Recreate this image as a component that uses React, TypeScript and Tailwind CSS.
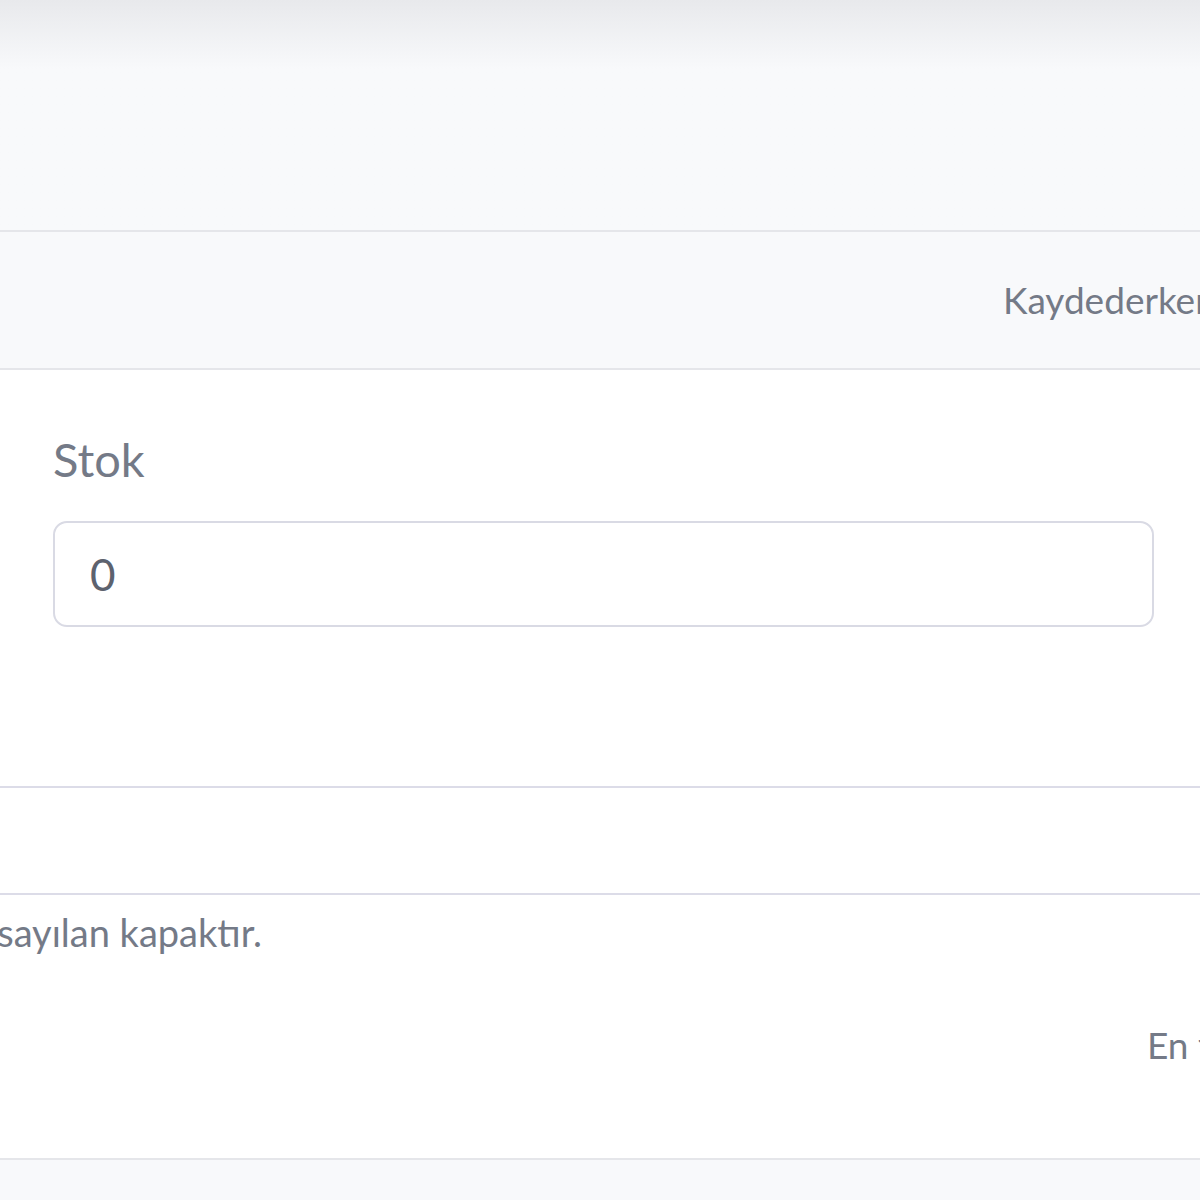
import React from 'react';

const font = { fontFamily: 'Lato, "Noto Sans", sans-serif' };

const App: React.FC = () => {
  return (
    <div className="w-[1200px] h-[1200px] overflow-hidden bg-[#f8f9fb] text-[#747a87]" style={font}>
      {/* top header shadow area */}
      <div className="h-[230px] bg-gradient-to-b from-[#e8e9ec] via-[#f8f9fb] via-30% to-[#f8f9fb]" />

      <div className="h-[140px] border-y-2 border-[#e5e6ea] flex items-center overflow-hidden whitespace-nowrap">
        <span className="pl-[1003px] text-[37px]">Kaydederken dikkat ediniz</span>
      </div>

      <div className="h-[416px] bg-white px-[53px] pt-[66px]">
        <label className="block text-[47px] leading-none">Stok</label>
        <div className="mt-[38px] w-[1101px] h-[106px] rounded-[14px] border-2 border-[#d9dae4] flex items-center px-[35px]">
          <span className="text-[44px] text-[#5d626e]">0</span>
        </div>
      </div>

      <div className="h-[109px] bg-white border-y-2 border-[#dcdce8]" />

      <div className="h-[265px] bg-white border-b-2 border-[#e5e6ea] overflow-hidden whitespace-nowrap">
        <div className="pt-[13px] w-[262px] flex justify-end">
          <span className="text-[38px] leading-[1.3]">Resimlerden ilki varsayılan kapaktır.</span>
        </div>
        <div className="mt-[60px] pl-[1147px] text-[37px]">En fazla 10 resim</div>
      </div>
    </div>
  );
};

export default App;
